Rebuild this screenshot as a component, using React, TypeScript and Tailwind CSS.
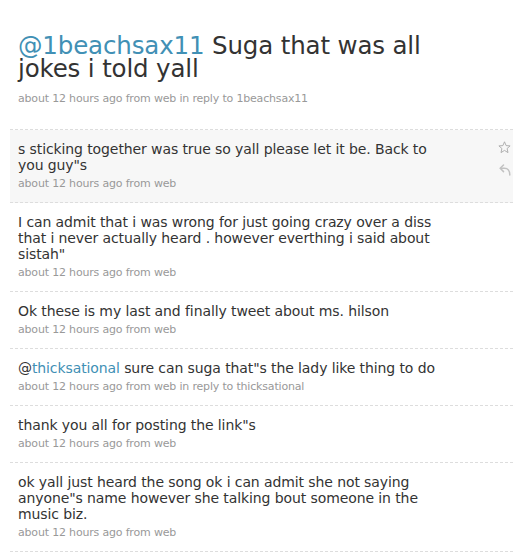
import React from "react";

type Tweet = {
  mention?: string;
  text: string;
  reply?: string;
  highlight?: boolean;
};

const tweets: Tweet[] = [
  { text: "s sticking together was true so yall please let it be. Back to you guy\"s", highlight: true },
  { text: "I can admit that i was wrong for just going crazy over a diss that i never actually heard . however everthing i said about sistah\"" },
  { text: "Ok these is my last and finally tweet about ms. hilson" },
  { mention: "thicksational", text: " sure can suga that\"s the lady like thing to do", reply: "thicksational" },
  { text: "thank you all for posting the link\"s" },
  { text: "ok yall just heard the song ok i can admit she not saying anyone\"s name however she talking bout someone in the music biz." },
];

function Star() {
  return (
    <svg width="13" height="13" viewBox="0 0 13 13" fill="none" stroke="#a8a8a8" strokeWidth="0.9">
      <path d="M6.5 0.8 L8.1 4.6 L12.1 4.9 L9.1 7.5 L10 11.6 L6.5 9.4 L3 11.6 L3.9 7.5 L0.9 4.9 L4.9 4.6 Z" strokeLinejoin="round" />
    </svg>
  );
}

function Reply() {
  return (
    <svg width="12" height="12" viewBox="0 0 12 12" fill="none" stroke="#c2c2c2" strokeWidth="1.5" strokeLinecap="round" strokeLinejoin="round">
      <path d="M4.5 1 L1.2 4.3 L4.5 7.6" />
      <path d="M1.5 4.3 H5.5 C8.8 4.3 10.8 6.5 10.8 11" />
    </svg>
  );
}

export default function App() {
  const font = { fontFamily: '"DejaVu Sans", "Lucida Grande", Verdana, sans-serif' };
  return (
    <div className="w-[513px] h-[552px] bg-white overflow-hidden" style={font}>
      <div className="pl-[18px] pt-[34px]">
        <h1 className="w-[470px] text-[24.5px] leading-[23px] text-[#333333] tracking-[-0.15px]">
          <span className="text-[#4190b5]">@1beachsax11</span> Suga that was all jokes i told yall
        </h1>
        <div className="mt-[12px] text-[11px] leading-[14px] text-[#999999] tracking-[-0.18px]">
          about 12 hours ago from web in reply to 1beachsax11
        </div>
      </div>
      <ul className="ml-[10px] mt-[23px] border-t border-dashed border-[#dddddd]">
        {tweets.map((t, i) => (
          <li
            key={i}
            className={`relative flex border-b border-dashed border-[#dddddd] pl-2 pr-[70px] pt-[11px] pb-[11px] ${t.highlight ? "bg-[#f7f7f7]" : ""}`}
          >
            <div className="flex flex-col">
              <p className="text-[14px] leading-[16px] text-[#333333] tracking-[-0.1px]">
                {t.mention && (
                  <>
                    @<span className="text-[#4190b5]">{t.mention}</span>
                  </>
                )}
                {t.text}
              </p>
              <div className="mt-[4px] text-[11px] leading-[14px] text-[#999999] tracking-[-0.18px]">
                about 12 hours ago from web{t.reply ? ` in reply to ${t.reply}` : ""}
              </div>
            </div>
            {t.highlight && (
              <div className="absolute right-[2px] top-[11px] flex flex-col items-center gap-[10px]">
                <Star />
                <Reply />
              </div>
            )}
          </li>
        ))}
      </ul>
    </div>
  );
}
